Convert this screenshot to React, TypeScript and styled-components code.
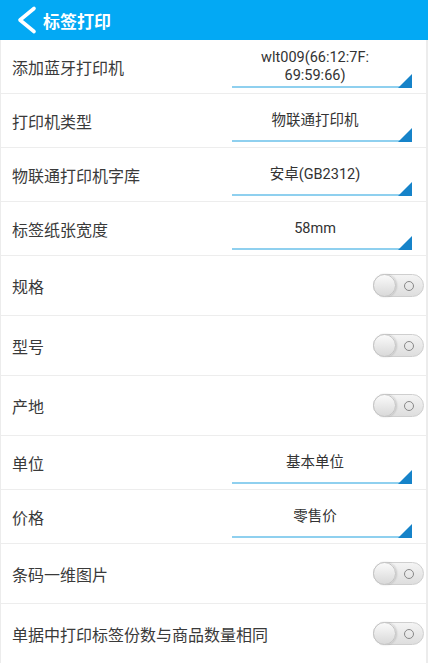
import styled, { createGlobalStyle } from "styled-components";

const Global = createGlobalStyle`
  html, body {
    margin: 0;
    padding: 0;
    background: #fff;
  }
  body {
    font-family: Roboto, "Noto Sans CJK SC", "Liberation Sans", sans-serif;
    color: #333;
  }
`;

const Page = styled.div`
  width: 428px;
  height: 663px;
  overflow: hidden;
  display: flex;
  flex-direction: column;
`;

const Header = styled.div`
  height: 40px;
  background: #03a9f4;
  display: flex;
  align-items: center;
  gap: 4px;
  padding-left: 15px;
  flex-shrink: 0;
`;

const HeaderTitle = styled.div`
  color: #fff;
  font-size: 17px;
  font-weight: 700;
`;

const List = styled.div`
  border-left: 1px solid #ececec;
  border-right: 2px solid #ececec;
  display: flex;
  flex-direction: column;
`;

const Row = styled.div<{ $tall?: boolean }>`
  height: ${({ $tall }) => ($tall ? 59 : 53)}px;
  border-bottom: 1px solid #ededed;
  display: flex;
  align-items: center;
  justify-content: space-between;
  padding-left: 11px;
  flex-shrink: 0;
`;

const Label = styled.div`
  font-size: 16px;
  color: #3a3a3a;
`;

/* выпадающий список: текст по центру, снизу голубая линия с уголком */
const Select = styled.div`
  position: relative;
  align-self: flex-start;
  width: 180px;
  height: 44px;
  margin-top: 4px;
  margin-right: 14px;
  display: flex;
  align-items: center;
  justify-content: center;
  box-sizing: border-box;
  padding: 4px 24px 0 10px;
  border-bottom: 2px solid #8fd0ef;
`;

const SelectText = styled.div`
  font-size: 14.5px;
  line-height: 18px;
  color: #333;
  text-align: center;
`;

const Corner = styled.div`
  position: absolute;
  right: 0;
  bottom: -2px;
  width: 0;
  height: 0;
  border-left: 14px solid transparent;
  border-bottom: 14px solid #1683c9;
`;

const Toggle = styled.div`
  position: relative;
  width: 51px;
  height: 23px;
  margin-right: 2px;
  border-radius: 12px;
  background: linear-gradient(#f4f4f4, #dedede);
  border: 1px solid #cfcfcf;
  box-sizing: border-box;
`;

const Knob = styled.div`
  position: absolute;
  left: -1px;
  top: -1px;
  width: 23px;
  height: 23px;
  border-radius: 50%;
  background: linear-gradient(#fafafa, #d9d9d9);
  border: 1px solid #c4c4c4;
  box-sizing: border-box;
  box-shadow: 1px 0 2px rgba(0, 0, 0, 0.15);
`;

const Ring = styled.div`
  position: absolute;
  right: 9px;
  top: 6px;
  width: 8px;
  height: 8px;
  border-radius: 50%;
  border: 1.5px solid #888;
`;

type Item =
  | { label: string; kind: "select"; value: string }
  | { label: string; kind: "toggle" };

const items: Item[] = [
  { label: "添加蓝牙打印机", kind: "select", value: "wlt009(66:12:7F:\n69:59:66)" },
  { label: "打印机类型", kind: "select", value: "物联通打印机" },
  { label: "物联通打印机字库", kind: "select", value: "安卓(GB2312)" },
  { label: "标签纸张宽度", kind: "select", value: "58mm" },
  { label: "规格", kind: "toggle" },
  { label: "型号", kind: "toggle" },
  { label: "产地", kind: "toggle" },
  { label: "单位", kind: "select", value: "基本单位" },
  { label: "价格", kind: "select", value: "零售价" },
  { label: "条码一维图片", kind: "toggle" },
  { label: "单据中打印标签份数与商品数量相同", kind: "toggle" },
];

export default function App() {
  return (
    <Page>
      <Global />
      <Header>
        <svg width="24" height="30" viewBox="0 0 24 30">
          <path
            d="M19 3.5 L5 15 L19 26.5"
            fill="none"
            stroke="#fff"
            strokeWidth="3.6"
            strokeLinecap="round"
            strokeLinejoin="round"
          />
        </svg>
        <HeaderTitle>标签打印</HeaderTitle>
      </Header>
      <List>
        {items.map((it, i) => (
          <Row key={i} $tall={it.kind === "toggle"}>
            <Label>{it.label}</Label>
            {it.kind === "select" ? (
              <Select>
                <SelectText>
                  {it.value.split("\n").map((l, j) => (
                    <div key={j}>{l}</div>
                  ))}
                </SelectText>
                <Corner />
              </Select>
            ) : (
              <Toggle>
                <Knob />
                <Ring />
              </Toggle>
            )}
          </Row>
        ))}
      </List>
    </Page>
  );
}
